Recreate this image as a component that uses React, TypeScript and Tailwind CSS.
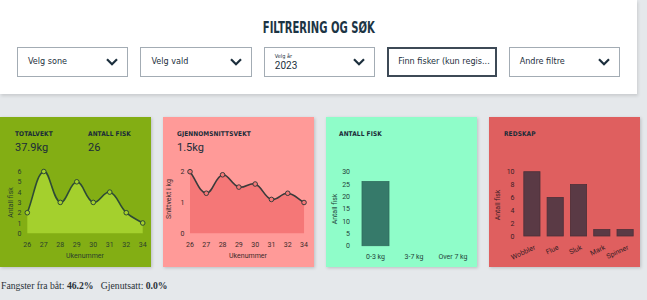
import React from 'react';

type Pt = [number, number];

// Chart.js-like spline (tension 0.4)
function splinePath(pts: Pt[], t = 0.4) {
  const cps = pts.map((p, i) => {
    const prev = pts[Math.max(0, i - 1)];
    const next = pts[Math.min(pts.length - 1, i + 1)];
    const d01 = Math.hypot(p[0] - prev[0], p[1] - prev[1]);
    const d12 = Math.hypot(next[0] - p[0], next[1] - p[1]);
    const s01 = d01 + d12 ? d01 / (d01 + d12) : 0;
    const s12 = d01 + d12 ? d12 / (d01 + d12) : 0;
    const dx = next[0] - prev[0];
    const dy = next[1] - prev[1];
    return {
      a: [p[0] - t * s01 * dx, p[1] - t * s01 * dy] as Pt,
      b: [p[0] + t * s12 * dx, p[1] + t * s12 * dy] as Pt,
    };
  });
  let d = `M${pts[0][0]},${pts[0][1]}`;
  for (let i = 1; i < pts.length; i++) {
    d += ` C${cps[i - 1].b.join(',')} ${cps[i].a.join(',')} ${pts[i].join(',')}`;
  }
  return d;
}

const weeks = ['26', '27', '28', '29', '30', '31', '32', '34'];
const tickFont = { fontFamily: 'Roboto, "Liberation Sans", sans-serif' };

function LineChart({
  data, x0, dx, y0, unit, ticks, yLabel, yLabelX, yLabelY, fill, line, dot, ink,
}: {
  data: number[]; x0: number; dx: number; y0: number; unit: number; ticks: number[];
  yLabel: string; yLabelX: number; yLabelY: number; fill: string; line: string; dot: string; ink: string;
}) {
  const pts: Pt[] = data.map((v, i) => [x0 + i * dx, y0 - v * unit]);
  const d = splinePath(pts);
  const last = pts[pts.length - 1];
  return (
    <svg width="151" height="102" className="block" style={tickFont}>
      <path d={`${d} L${last[0]},${y0} L${x0},${y0} Z`} fill={fill} />
      <path d={d} fill="none" stroke={line} strokeWidth="1.6" />
      {pts.map((p, i) => (
        <circle key={i} cx={p[0]} cy={p[1]} r="2.3" fill={dot} stroke={line} strokeWidth="1" />
      ))}
      {ticks.map((v) => (
        <text key={v} x="21.5" y={y0 - v * unit + 2.5} fontSize="7" textAnchor="end" fill={ink}>{v}</text>
      ))}
      {weeks.map((w, i) => (
        <text key={w} x={x0 + i * dx} y="81.5" fontSize="7" textAnchor="middle" fill={ink}>{w}</text>
      ))}
      <text x="85" y="93" fontSize="7" textAnchor="middle" fill={ink}>Ukenummer</text>
      <text x={yLabelX} y={yLabelY} fontSize="7" textAnchor="middle" fill={ink}
        transform={`rotate(-90 ${yLabelX} ${yLabelY})`} dy="2.5">{yLabel}</text>
    </svg>
  );
}

function Chevron() {
  return (
    <svg width="12" height="8" viewBox="0 0 12 8" className="shrink-0">
      <polyline points="1,1.2 6,6.2 11,1.2" fill="none" stroke="#1c2f3d" strokeWidth="2.2" />
    </svg>
  );
}

function Select({ label }: { label: string }) {
  return (
    <div className="flex-1 h-[30px] border border-[#a3acb4] bg-white flex items-center justify-between pl-[10px] pr-[9px]">
      <span className="text-[9px] text-[#1c2f3d] [font-family:'DejaVu_Sans_Condensed','Liberation_Sans_Narrow',sans-serif]">{label}</span>
      <Chevron />
    </div>
  );
}

const heading = "text-[6.5px] leading-[8px] font-bold tracking-[0.1px] text-[#1a2c38] [font-family:'DejaVu_Sans_Condensed','Liberation_Sans_Narrow',sans-serif]";
const value = "mt-[4px] text-[11px] leading-[12px] text-[#1a2c38] [font-family:Roboto,'Liberation_Sans',sans-serif]";

export default function App() {
  return (
    <div className="min-h-screen w-[647px] bg-[#e5e8eb] overflow-hidden">
      {/* Filter panel */}
      <div className="w-[637px] h-[94px] bg-white shadow-[1px_2px_3px_rgba(0,0,0,0.12)] px-[17px] pt-[18px]">
        <div className="flex justify-center">
          <h1 className="inline-block scale-x-[0.72] text-[15.5px] leading-[20px] font-bold text-[#1c3444] whitespace-nowrap [font-family:'DejaVu_Sans_Condensed','Liberation_Sans_Narrow',sans-serif]">
            FILTRERING OG SØK
          </h1>
        </div>
        <div className="mt-[9px] flex gap-[12px]">
          <Select label="Velg sone" />
          <Select label="Velg vald" />
          <div className="flex-1 h-[30px] border border-[#a3acb4] bg-white flex items-center justify-between pl-[10px] pr-[9px]">
            <div className="flex flex-col">
              <span className="text-[5.5px] leading-[7px] text-[#1c2f3d] [font-family:'DejaVu_Sans_Condensed','Liberation_Sans_Narrow',sans-serif]">Velg år</span>
              <span className="text-[10px] leading-[12px] text-[#1c2f3d] [font-family:Roboto,'Liberation_Sans',sans-serif]">2023</span>
            </div>
            <Chevron />
          </div>
          <div className="flex-1 h-[30px] border-2 border-[#3d4a56] bg-white flex items-center pl-[9px] pr-[6px] overflow-hidden">
            <span className="text-[9px] text-[#1c2f3d] whitespace-nowrap [font-family:'DejaVu_Sans_Condensed','Liberation_Sans_Narrow',sans-serif]">Finn fisker (kun regis...</span>
          </div>
          <Select label="Andre filtre" />
        </div>
      </div>

      {/* Cards */}
      <div className="mt-[23px] flex gap-[12px] w-[638px]">
        <div className="w-[151px] h-[150px] bg-[#83ae14] shadow-[1px_1px_3px_rgba(0,0,0,0.18)]">
          <div className="h-[48px] pt-[13px] pl-[15px] flex">
            <div className="w-[73px]">
              <div className={heading}>TOTALVEKT</div>
              <div className={value}>37.9kg</div>
            </div>
            <div>
              <div className={heading}>ANTALL FISK</div>
              <div className={value}>26</div>
            </div>
          </div>
          <LineChart data={[2, 6, 3, 5, 3, 4, 2, 1]} x0={27.3} dx={16.49} y0={68.3} unit={10.3}
            ticks={[0, 1, 2, 3, 4, 5, 6]} yLabel="Antall fisk" yLabelX={10} yLabelY={37.5}
            fill="#a4d02d" line="#2e4a36" dot="#a4d02d" ink="#2b3f2c" />
        </div>

        <div className="w-[151px] h-[150px] bg-[#ff9a98] shadow-[1px_1px_3px_rgba(0,0,0,0.18)]">
          <div className="h-[48px] pt-[13px] pl-[14px]">
            <div className={heading}>GJENNOMSNITTSVEKT</div>
            <div className={value}>1.5kg</div>
          </div>
          <LineChart data={[2, 1.3, 1.9, 1.5, 1.6, 1.1, 1.3, 1.0]} x0={27} dx={16.29} y0={68.3} unit={30.8}
            ticks={[0, 1, 2]} yLabel="Snittvekt i kg" yLabelX={5} yLabelY={34}
            fill="#f57777" line="#3b3b3b" dot="#f57777" ink="#3a2a2a" />
        </div>

        <div className="w-[151px] h-[150px] bg-[#8ffdc9] shadow-[1px_1px_3px_rgba(0,0,0,0.18)]">
          <div className="h-[48px] pt-[13px] pl-[13px]">
            <div className={heading}>ANTALL FISK</div>
          </div>
          <svg width="151" height="102" className="block" style={tickFont}>
            <rect x="36" y={80.7 - 26 * 2.467} width="27" height={26 * 2.467} fill="#367a6a" stroke="#2f6c5d" strokeWidth="0.8" />
            {[0, 5, 10, 15, 20, 25, 30].map((v) => (
              <text key={v} x="24" y={80.7 - v * 2.467 + 2.5} fontSize="7" textAnchor="end" fill="#24433a">{v}</text>
            ))}
            {[['0-3 kg', 49.5], ['3-7 kg', 88], ['Over 7 kg', 127]].map(([l, x]) => (
              <text key={l} x={x} y="94.2" fontSize="7" textAnchor="middle" fill="#24433a">{l}</text>
            ))}
            <text x="8" y="44" dy="2.5" fontSize="7" textAnchor="middle" fill="#24433a" transform="rotate(-90 8 44)">Antall fisk</text>
          </svg>
        </div>

        <div className="w-[151px] h-[150px] bg-[#df5f5f] shadow-[1px_1px_3px_rgba(0,0,0,0.18)]">
          <div className="h-[48px] pt-[13px] pl-[15px]">
            <div className={heading}>REDSKAP</div>
          </div>
          <svg width="151" height="102" className="block" style={tickFont}>
            {[['Wobbler', 10], ['Flue', 6], ['Sluk', 8], ['Mark', 1], ['Spinner', 1]].map(([l, v], i) => {
              const cx = 42.9 + i * 23.3;
              const h = (v as number) * 6.43;
              return (
                <g key={l as string}>
                  <rect x={cx - 8.1} y={71 - h} width="16.2" height={h} fill="#5a3a45" stroke="#4d3039" strokeWidth="0.8" />
                  <text x={cx + 4} y="84" fontSize="7" textAnchor="end" fill="#3a2026" transform={`rotate(-25 ${cx + 4} 84)`}>{l}</text>
                </g>
              );
            })}
            {[0, 2, 4, 6, 8, 10].map((v) => (
              <text key={v} x="25.5" y={71 - v * 6.43 + 2.5} fontSize="7" textAnchor="end" fill="#3a2026">{v}</text>
            ))}
            <text x="8.7" y="40" dy="2.5" fontSize="7" textAnchor="middle" fill="#3a2026" transform="rotate(-90 8.7 40)">Antall fisk</text>
          </svg>
        </div>
      </div>

      <p className="mt-[12px] pl-[1px] text-[9.7px] text-[#2a3138] [font-family:'Liberation_Serif',serif]">
        Fangster fra båt: <b>46.2%</b>&nbsp;&nbsp; Gjenutsatt: <b>0.0%</b>
      </p>
    </div>
  );
}
